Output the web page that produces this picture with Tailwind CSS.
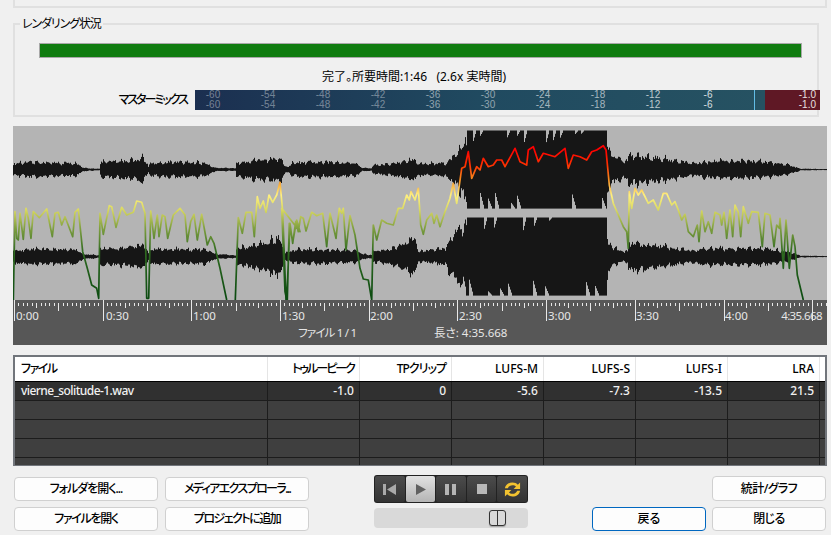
<!DOCTYPE html>
<html lang="ja">
  <head>
    <meta charset="UTF-8" />
    <title>レンダリング状況</title>
    <script src="https://cdn.jsdelivr.net/npm/@tailwindcss/browser@4"></script>
  </head>
  <body class="bg-[#f0f0f0] text-black text-[12px] leading-[16px] font-['Noto_Sans','Noto_Sans_CJK_JP',sans-serif] [font-feature-settings:'palt'] overflow-hidden">
    <div class="w-[831px] h-[535px] flex flex-col overflow-hidden">
      <!-- cut off box above -->
      <div class="h-[8px] ml-[13px] mr-[4px] border-x-2 border-b-2 border-[#e0e0e0]"></div>

      <!-- render status -->
      <div class="relative mt-[15px] ml-[13px] mr-[12px] h-[94px] border-2 border-[#e0e0e0]">
        <div class="absolute left-[5px] top-[-9px] px-[2px] bg-[#f0f0f0] tracking-[-1.1px]">レンダリング状況</div>
        <div class="mt-[18px] ml-[24px] mr-[15px] h-[15px] bg-[#107c10] border border-[#a8a8a8]"></div>
        <div class="mt-[11px] ml-[307px] whitespace-pre h-[16px]">完了。所要時間:1:46   (2.6x 実時間)</div>
        <div class="mt-[5px] flex items-center -mr-[3px]">
          <div class="w-[180px] pr-[8px] text-right font-medium tracking-[-2px]">マスターミックス</div>
          <div class="relative flex-1 h-[20px] flex text-[10px] leading-[10px] font-['Liberation_Sans',sans-serif]">
            <div class="flex-1 overflow-hidden bg-gradient-to-r from-[#1b2f50] via-[#204a60] to-[#265262] text-white/40">
              <div class="flex -ml-[9.5px]">
                <span class="w-[55px] shrink-0 text-center">-60</span><span class="w-[55px] shrink-0 text-center">-54</span><span class="w-[55px] shrink-0 text-center">-48</span><span class="w-[55px] shrink-0 text-center">-42</span><span class="w-[55px] shrink-0 text-center text-white/50">-36</span><span class="w-[55px] shrink-0 text-center text-white/50">-30</span><span class="w-[55px] shrink-0 text-center text-white/60">-24</span><span class="w-[55px] shrink-0 text-center text-white/60">-18</span><span class="w-[55px] shrink-0 text-center text-white/70">-12</span><span class="w-[55px] shrink-0 text-center text-white/80">-6</span>
              </div>
              <div class="flex -ml-[9.5px]">
                <span class="w-[55px] shrink-0 text-center">-60</span><span class="w-[55px] shrink-0 text-center">-54</span><span class="w-[55px] shrink-0 text-center">-48</span><span class="w-[55px] shrink-0 text-center">-42</span><span class="w-[55px] shrink-0 text-center text-white/50">-36</span><span class="w-[55px] shrink-0 text-center text-white/50">-30</span><span class="w-[55px] shrink-0 text-center text-white/60">-24</span><span class="w-[55px] shrink-0 text-center text-white/60">-18</span><span class="w-[55px] shrink-0 text-center text-white/70">-12</span><span class="w-[55px] shrink-0 text-center text-white/80">-6</span>
              </div>
            </div>
            <div class="absolute left-[559px] top-0 bottom-0 w-px bg-[#62bde6]"></div>
            <div class="w-[55px] bg-[#5f1825] text-[#e8e0e0] text-right pr-[4px]">
              <div>-1.0</div>
              <div>-1.0</div>
            </div>
          </div>
        </div>
      </div>

      <!-- waveform -->
      <div class="mt-[9px] ml-[13px] mr-[4px] h-[219px] flex flex-col">
        <svg id="wave" width="814" height="174" viewBox="13 126 814 174" class="block shrink-0 bg-[#b4b4b4]">
          <defs>
            <linearGradient id="lufs" gradientUnits="userSpaceOnUse" x1="0" y1="150" x2="0" y2="300">
              <stop offset="0" stop-color="#ff0000" />
              <stop offset="0.1" stop-color="#ff3000" />
              <stop offset="0.2" stop-color="#f59020" />
              <stop offset="0.3" stop-color="#fff080" />
              <stop offset="0.4" stop-color="#d8d860" />
              <stop offset="0.52" stop-color="#80a040" />
              <stop offset="0.68" stop-color="#2f6a20" />
              <stop offset="1" stop-color="#0a4a10" />
            </linearGradient>
            <filter id="soft" x="0" y="0" width="1" height="1"><feGaussianBlur stdDeviation="0.4" /></filter>
          </defs>
          <path id="ch" fill="none" stroke="#141414" stroke-width="1" filter="url(#soft)" />
          <path id="curve" fill="none" stroke="url(#lufs)" stroke-width="1.7" stroke-linejoin="round" />
        </svg>
        <div class="relative flex-1 bg-[#575757] text-[#e6e6e6] text-[11.5px] leading-[14px]">
          <svg id="ruler" width="814" height="21" class="block"></svg>
          <div class="absolute left-[3px] top-[9px]">0:00</div>
          <div class="absolute left-[93px] top-[9px]">0:30</div>
          <div class="absolute left-[180px] top-[9px]">1:00</div>
          <div class="absolute left-[269px] top-[9px]">1:30</div>
          <div class="absolute left-[357px] top-[9px]">2:00</div>
          <div class="absolute left-[446px] top-[9px]">2:30</div>
          <div class="absolute left-[535px] top-[9px]">3:00</div>
          <div class="absolute left-[623px] top-[9px]">3:30</div>
          <div class="absolute left-[712px] top-[9px]">4:00</div>
          <div class="absolute right-[5px] top-[9px] tracking-[-0.6px]">4:35.668</div>
          <div class="absolute left-[285px] top-[26px] tracking-[-0.8px]">ファイル 1 / 1</div>
          <div class="absolute left-[421px] top-[26px]">長さ: 4:35.668</div>
        </div>
      </div>

      <!-- results table -->
      <div class="mt-[10px] ml-[13px] mr-[4px] h-[111px] border-2 border-[#71757b] border-b-[1px] bg-[#3f3f3f] overflow-hidden">
        <div class="grid grid-cols-[253px_92px_92px_92px_92px_92px_92px_1fr] h-[25px] bg-white border-b border-black items-center font-medium">
          <div class="h-full leading-[24px] px-[6px] border-r border-[#e5e5e5] tracking-[-1.5px]">ファイル</div>
          <div class="h-full leading-[24px] pr-[5px] text-right border-r border-[#e5e5e5] tracking-[-2px]">トゥルーピーク</div>
          <div class="h-full leading-[24px] pr-[5px] text-right border-r border-[#e5e5e5] tracking-[-1px]">TPクリップ</div>
          <div class="h-full leading-[24px] pr-[5px] text-right border-r border-[#e5e5e5]">LUFS-M</div>
          <div class="h-full leading-[24px] pr-[5px] text-right border-r border-[#e5e5e5]">LUFS-S</div>
          <div class="h-full leading-[24px] pr-[5px] text-right border-r border-[#e5e5e5]">LUFS-I</div>
          <div class="h-full leading-[24px] pr-[5px] text-right border-r border-[#e5e5e5]">LRA</div>
          <div></div>
        </div>
        <div class="grid grid-cols-[253px_92px_92px_92px_92px_92px_92px_1fr] h-[19px] bg-[#303030] border-b border-[#1c1c1c] text-[#f0f0f0] font-medium leading-[18px]">
          <div class="px-[6px] border-r border-[#1c1c1c] tracking-[-0.55px]">vierne_solitude-1.wav</div>
          <div class="pr-[5px] text-right border-r border-[#1c1c1c]">-1.0</div>
          <div class="pr-[5px] text-right border-r border-[#1c1c1c]">0</div>
          <div class="pr-[5px] text-right border-r border-[#1c1c1c]">-5.6</div>
          <div class="pr-[5px] text-right border-r border-[#1c1c1c]">-7.3</div>
          <div class="pr-[5px] text-right border-r border-[#1c1c1c]">-13.5</div>
          <div class="pr-[5px] text-right border-r border-[#1c1c1c]">21.5</div>
          <div></div>
        </div>
        <div class="grid grid-cols-[253px_92px_92px_92px_92px_92px_92px_1fr] h-[19px] border-b border-[#1c1c1c]">
          <div class="border-r border-[#1c1c1c]"></div><div class="border-r border-[#1c1c1c]"></div><div class="border-r border-[#1c1c1c]"></div><div class="border-r border-[#1c1c1c]"></div><div class="border-r border-[#1c1c1c]"></div><div class="border-r border-[#1c1c1c]"></div><div class="border-r border-[#1c1c1c]"></div><div></div>
        </div>
        <div class="grid grid-cols-[253px_92px_92px_92px_92px_92px_92px_1fr] h-[19px] border-b border-[#1c1c1c]">
          <div class="border-r border-[#1c1c1c]"></div><div class="border-r border-[#1c1c1c]"></div><div class="border-r border-[#1c1c1c]"></div><div class="border-r border-[#1c1c1c]"></div><div class="border-r border-[#1c1c1c]"></div><div class="border-r border-[#1c1c1c]"></div><div class="border-r border-[#1c1c1c]"></div><div></div>
        </div>
        <div class="grid grid-cols-[253px_92px_92px_92px_92px_92px_92px_1fr] h-[19px] border-b border-[#1c1c1c]">
          <div class="border-r border-[#1c1c1c]"></div><div class="border-r border-[#1c1c1c]"></div><div class="border-r border-[#1c1c1c]"></div><div class="border-r border-[#1c1c1c]"></div><div class="border-r border-[#1c1c1c]"></div><div class="border-r border-[#1c1c1c]"></div><div class="border-r border-[#1c1c1c]"></div><div></div>
        </div>
        <div class="grid grid-cols-[253px_92px_92px_92px_92px_92px_92px_1fr] h-[19px]">
          <div class="border-r border-[#1c1c1c]"></div><div class="border-r border-[#1c1c1c]"></div><div class="border-r border-[#1c1c1c]"></div><div class="border-r border-[#1c1c1c]"></div><div class="border-r border-[#1c1c1c]"></div><div class="border-r border-[#1c1c1c]"></div><div class="border-r border-[#1c1c1c]"></div><div></div>
        </div>
      </div>

      <!-- bottom controls -->
      <div class="mt-[11px] ml-[14px] mr-[5px] flex font-medium">
        <div class="grid grid-cols-[144px_144px] gap-x-[7px] gap-y-[6px]">
          <button class="h-[24px] bg-[#fdfdfd] border border-[#d0d0d0] rounded-[4px] tracking-[-1px]">フォルダを開く...</button>
          <button class="h-[24px] bg-[#fdfdfd] border border-[#d0d0d0] rounded-[4px] tracking-[-1.6px]">メディアエクスプローラ...</button>
          <button class="h-[24px] bg-[#fdfdfd] border border-[#d0d0d0] rounded-[4px] tracking-[-1.3px]">ファイルを開く</button>
          <button class="h-[24px] bg-[#fdfdfd] border border-[#d0d0d0] rounded-[4px] tracking-[-1.5px]">プロジェクトに追加</button>
        </div>
        <div class="ml-[65px] w-[154px] -mt-[2px]">
          <div class="flex h-[28px] gap-px bg-[#222] rounded-[3px] p-px">
            <div class="flex-1 flex items-center justify-center rounded-[2px] bg-gradient-to-b from-[#4c4c4c] to-[#333]">
              <svg width="15" height="13" viewBox="0 0 15 13"><path d="M1 1h3v11H1zM14 1v11L5 6.500z" fill="#a9a9a9" /></svg>
            </div>
            <div class="flex-1 flex items-center justify-center rounded-[2px] bg-gradient-to-b from-[#e2e2e2] to-[#b4b4b4]">
              <svg width="13" height="13" viewBox="0 0 13 13"><path d="M2 1l10 5.500L2 12z" fill="#606060" /></svg>
            </div>
            <div class="flex-1 flex items-center justify-center rounded-[2px] bg-gradient-to-b from-[#4c4c4c] to-[#333]">
              <svg width="13" height="13" viewBox="0 0 13 13"><path d="M1 1h4v11H1zM8 1h4v11H8z" fill="#b4b4b4" /></svg>
            </div>
            <div class="flex-1 flex items-center justify-center rounded-[2px] bg-gradient-to-b from-[#4c4c4c] to-[#333]">
              <svg width="12" height="12" viewBox="0 0 12 12"><path d="M1 1h10v10H1z" fill="#b8b8b8" /></svg>
            </div>
            <div class="flex-1 flex items-center justify-center rounded-[2px] bg-gradient-to-b from-[#4c4c4c] to-[#333]">
              <svg width="21" height="19" viewBox="0 0 18 16"><path d="M2.500 7C3 3.800 5.600 2 9 2c2 0 3.500.7 4.600 1.900L15.500 2v5.500H10l2-2C11.300 4.700 10.300 4.300 9 4.300 7.100 4.300 5.600 5.300 5 7zM15.500 9c-.5 3.200-3.100 5-6.500 5-2 0-3.500-.7-4.600-1.900L2.500 14V8.500H8l-2 2c.7.800 1.700 1.200 3 1.200 1.900 0 3.400-1 4-2.700z" fill="#f2c230" /></svg>
            </div>
          </div>
          <div class="relative h-[20px] mt-[5px] bg-[#d9d9d9] rounded-[4px]">
            <div class="absolute left-[115px] top-[2px] w-[17px] h-[16px] rounded-[3px] border border-[#333] bg-[#d9d9d9] flex justify-center shadow-[0_1px_1px_rgba(0,0,0,0.25)]">
              <div class="w-px h-full bg-[#333]"></div>
            </div>
          </div>
        </div>
        <div class="ml-auto grid grid-cols-[114px_114px] gap-x-[6px] gap-y-[6px] -mt-px">
          <div></div>
          <button class="h-[25px] bg-[#fdfdfd] border border-[#d0d0d0] rounded-[4px] tracking-[-0.6px]">統計/グラフ</button>
          <button class="h-[24px] bg-[#fdfdfd] border border-[#0067c0] rounded-[4px]">戻る</button>
          <button class="h-[24px] bg-[#fdfdfd] border border-[#d0d0d0] rounded-[4px] tracking-[-0.5px]">閉じる</button>
        </div>
      </div>
    </div>

    <script>
      // loudness curve, points read off the picture in 3x crop coordinates
      const seg1 = [40,525,45,260,50,340,55,345,60,265,70,343,78,250,85,280,93,340,100,260,118,278,140,252,157,335,165,265,175,262,185,300,195,275,218,335,225,262,235,252,248,380,262,430,275,480,290,490,296,520,300,265,310,328,328,242,335,245,348,307,365,247,380,270,400,262,410,228,425,232,435,265,440,520,446,520,452,258,462,340,472,270,477,335,487,270,495,275,503,340,520,270,540,250,555,270,562,350,572,290,582,268,592,345,605,268,622,360,632,335,642,355,660,430,680,525];
      const seg2 = [706,525,715,278,727,325,738,262,755,262,763,335,772,215,780,250,790,228,798,262,807,210,818,232,830,210,840,172,848,260,858,525,862,525,868,295,878,352,890,285,900,320];
      const seg3 = [5,250,15,500,20,525,30,295,38,355,47,290,55,320,62,275,70,280,78,318,95,262,110,272,128,265,140,365,150,265,168,340,178,250,185,265,190,250,198,375,210,272,225,330,240,430,250,462,265,465,275,525,280,300,290,345,305,285,320,295,340,300,355,250,368,250,380,210,388,225,393,200,405,225,415,190,422,300,430,328,440,285,455,265,462,295,470,270,480,305,495,260,510,220,520,175,530,235,545,130,555,125,565,80,575,160,590,125,600,135,610,100,625,125,640,120,650,105,665,105,675,125,705,70,720,110,740,120,745,75,760,65,775,110,790,85,825,95];
      const seg4 = [15,70,25,130,40,90,60,95,80,105,95,80,110,75,130,62,138,75,148,180,160,235,175,270,190,305,200,320,205,370,208,200,215,250,225,190,235,210,245,195,265,235,280,225,295,255,310,205,320,205,335,240,345,230,355,255,365,285,375,268,385,320,400,335,412,300,417,350,425,258,435,320,445,290,455,325,465,262,480,270,485,300,492,262,500,340,510,255,518,335,525,240,535,262,542,335,550,245,565,295,575,260,595,262,607,365,615,265,630,270,642,365,650,300,658,310,660,280,670,430,678,285,688,430,698,330,705,365,712,450,730,525];
      const toPts = (a, off) => {
        const out = [];
        for (let i = 0; i < a.length; i += 2) out.push((off + a[i] / 3).toFixed(1) + " " + (125 + a[i + 1] / 3).toFixed(1));
        return out;
      };
      const part1 = "M" + toPts(seg1, 0).join("L");
      const part2 = "M" + toPts(seg2, 0).concat(toPts(seg3, 280), toPts(seg4, 560)).join("L");
      document.getElementById("curve").setAttribute("d", part1 + part2);

      // channel envelopes: x, amplitude in px
      const topEnv = [13,7,20,8,35,9,45,9,55,8,70,8,78,7,82,2,95,1,99,1,100,9,115,10,135,12,143,15,146,10,148,3,150,8,170,9,190,9,205,8,215,2,235,1.500,236,9,250,11,270,13,280,14,285,4,288,3,292,8,310,9,340,9,355,8,362,2,371,1.500,372,5,390,7,405,10,410,13,420,7,445,8,450,13,458,22,463,34,467,39,606,39,608,22,612,16,620,13,627,10,628,19,640,16,660,14,672,12,685,9,695,7,700,9,720,11,760,10,775,8,790,5,800,1,827,0.5];
      const botEnv = [13,8,20,8,35,10,45,9,55,9,70,9,78,8,82,3,95,2,99,1.500,100,10,115,10,135,13,143,14,146,10,148,3,150,9,170,9,190,9,205,9,215,3,235,1.500,236,10,250,13,270,19,278,24,284,7,288,4,292,8,310,9,340,8,355,7,362,3,371,2,372,7,390,9,405,17,414,24,418,6,445,10,450,21,456,31,462,38,467,39,606,39,608,15,612,12,620,7,627,6,628,18,640,16,660,13,672,11,685,8,695,7,700,10,720,10,760,10,775,8,790,5,800,1,827,0.5];
      const lerpEnv = (env, x) => {
        for (let i = 0; i < env.length - 2; i += 2) {
          if (x <= env[i + 2]) return env[i + 1] + (env[i + 3] - env[i + 1]) * (x - env[i]) / (env[i + 2] - env[i] || 1);
        }
        return env[env.length - 1];
      };
      let seed = 12345;
      const rnd = () => (seed = (seed * 16807) % 2147483647) / 2147483647;
      let d = "";
      [[169.5, topEnv], [256.5, botEnv]].forEach(([cy, env]) => {
        let notchUp = 0, notchDn = 0, depthUp = 0, depthDn = 0;
        for (let x = 13; x < 827; x++) {
          const a = lerpEnv(env, x);
          const lump = 0.8 + 0.2 * Math.sin(x * 0.9) * Math.sin(x * 0.23 + cy);
          let up = a * lump * (0.8 + 0.35 * rnd());
          let dn = a * lump * (0.8 + 0.35 * rnd());
          if (a >= 39) {
            // clipped part: flat edges with narrow notches
            if (notchUp <= 0 && rnd() < 0.05) { notchUp = 3; depthUp = 3 + rnd() * 10; }
            if (notchDn <= 0 && rnd() < 0.07) { notchDn = 4; depthDn = 4 + rnd() * 12; }
            up = 39 - (notchUp > 0 ? depthUp * notchUp / 3 : 0);
            dn = 39 - (notchDn > 0 ? depthDn * notchDn / 4 : 0);
            notchUp--;
            notchDn--;
          }
          d += "M" + (x + 0.5) + " " + (cy - Math.min(up, 39)).toFixed(1) + "V" + (cy + Math.min(dn, 39) + 0.1).toFixed(1);
        }
      });
      document.getElementById("ch").setAttribute("d", d);

      // ruler ticks, 20 divisions per 30 seconds
      let r = "";
      const step = 88.7 / 20;
      for (let i = 0; i * step < 814; i++) {
        const x = Math.round(0.9 + i * step) + 0.5;
        let y1 = 3, y2 = 6;
        if (i % 20 === 0) { y1 = 0; y2 = 21; }
        else if (i % 10 === 0) y2 = 11;
        else if (i % 5 === 0) y2 = 8;
        r += '<path d="M' + x + " " + y1 + "V" + y2 + '" stroke="#e8e8e8" stroke-width="1" />';
      }
      document.getElementById("ruler").innerHTML = r;
    </script>
  </body>
</html>
